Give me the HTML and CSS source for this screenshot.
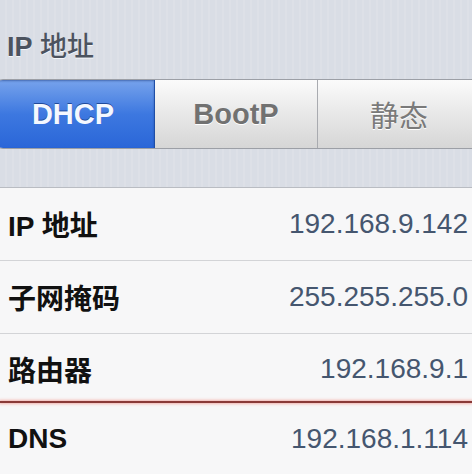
FILE: index.html
```html
<!DOCTYPE html>
<html lang="zh-CN">
<head>
	<meta charset="UTF-8">
	<title>IP 地址</title>
	<link rel="stylesheet" href="styles.css">
</head>
<body>

	<div class="screen">
		<div class="group-title"><b>IP</b> 地址</div>

		<div class="segmented">
			<div class="seg active">DHCP</div>
			<div class="seg">BootP</div>
			<div class="seg last">静态</div>
		</div>

		<div class="table">
			<div class="row">
				<span class="label">IP 地址</span>
				<span class="value">192.168.9.142</span>
			</div>
			<div class="row">
				<span class="label">子网掩码</span>
				<span class="value">255.255.255.0</span>
			</div>
			<div class="row short">
				<span class="label">路由器</span>
				<span class="value">192.168.9.1</span>
			</div>
			<div class="row">
				<span class="label">DNS</span>
				<span class="value">192.168.1.114</span>
			</div>
		</div>
	</div>

</body>
</html>
```

FILE: styles.css
```css
*{
	padding: 0;
	margin: 0;
	box-sizing: border-box;
}
html, body{
	width: 472px;
	height: 474px;
	overflow: hidden;
}
body{
	font-family: "Liberation Sans", "Noto Sans CJK SC", sans-serif;
	background: repeating-linear-gradient(90deg, #d9dde5 0, #d9dde5 5px, #dde0e7 5px, #dde0e7 7px);
}
.screen{
	padding-top: 32px;
}
/* 分组标题 */
.group-title{
	height: 30px;
	line-height: 30px;
	padding-left: 7px;
	font-size: 27px;
	font-weight: 500;
	color: #4c535f;
	text-shadow: 0 1px 0 #f4f6f9;
}
.group-title b{
	font-weight: bold;
}
/* 分段控件 */
.segmented{
	display: flex;
	width: 496px;
	height: 70px;
	margin: 17px 0 0 -9px;
	border: 1px solid #9c9fa6;
	border-radius: 12px;
	overflow: hidden;
}
.seg{
	flex: 1;
	display: flex;
	align-items: center;
	justify-content: center;
	font-size: 29px;
	font-weight: bold;
	color: #717171;
	text-shadow: 0 1px 0 #ffffff;
	background: linear-gradient(#fbfbfb, #e6e6e6 55%, #d6d6d6);
	border-left: 1px solid #a9abb0;
}
.seg.active{
	color: #f4f8ff;
	text-shadow: 0 -1px 0 #1f4a9a;
	background: linear-gradient(#77a3ec, #3d78e0 50%, #2a66d8);
	border-left: none;
	border-right: 1px solid #1f4ea6;
	box-shadow: inset 0 1px 2px rgba(20, 50, 120, 0.5);
}
.seg.active + .seg{
	border-left: none;
}
.seg.last{
	padding-right: 6px;
	font-weight: normal;
	color: #7a7a7a;
}
/* 列表 */
.table{
	margin-top: 38px;
	background: #f7f7f8;
	border-top: 1px solid #b9bcc2;
}
.row{
	display: flex;
	align-items: center;
	justify-content: space-between;
	height: 73px;
	padding: 0 4px 0 8px;
	border-bottom: 1px solid #d3d4d7;
	font-size: 28px;
}
.row.short{
	height: 69px;
	border-bottom: none;
	position: relative;
}
/* 标注的红线 */
.row.short::after{
	content: "";
	position: absolute;
	left: 0;
	right: 0;
	bottom: 0;
	height: 2px;
	background: #8a3a38;
	box-shadow: 0 0 3px 1px #f3b2ae;
}
.label{
	font-weight: bold;
	color: #111111;
}
.value{
	color: #45566f;
}
```
